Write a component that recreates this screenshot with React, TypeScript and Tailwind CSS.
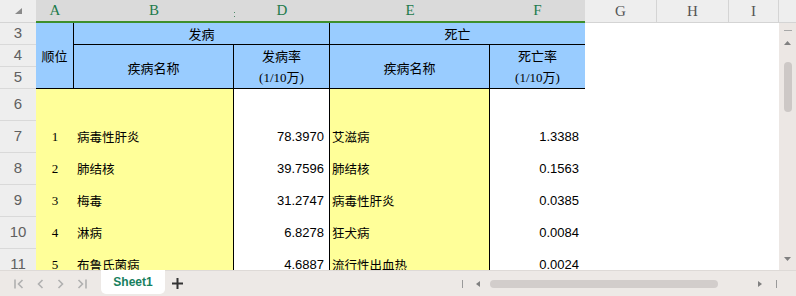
import React from "react";

const dataRows = [
  { no: "1", name: "病毒性肝炎", rate: "78.3970", dName: "艾滋病", dRate: "1.3388" },
  { no: "2", name: "肺结核", rate: "39.7596", dName: "肺结核", dRate: "0.1563" },
  { no: "3", name: "梅毒", rate: "31.2747", dName: "病毒性肝炎", dRate: "0.0385" },
  { no: "4", name: "淋病", rate: "6.8278", dName: "狂犬病", dRate: "0.0084" },
  { no: "5", name: "布鲁氏菌病", rate: "4.6887", dName: "流行性出血热", dRate: "0.0024" },
];

const rowStarts = ["row-start-5", "row-start-6", "row-start-7", "row-start-8", "row-start-9"];

const cjk = "font-['Noto_Sans_CJK_SC',sans-serif]";
const num = "font-['Liberation_Sans',Arial,sans-serif]";

const ColHead = ({ label, w, active }: { label: string; w: string; active?: boolean }) => (
  <div
    className={`${w} h-[23px] flex items-center justify-center text-[15px] font-['Liberation_Serif',serif] ${
      active
        ? "bg-[#dadada] text-[#1d7a4c] border-b-2 border-[#3e8f2c]"
        : "bg-[#eeeeee] text-[#555] border-b border-r border-[#d4d4d4]"
    }`}
  >
    {label}
  </div>
);

const RowHead = ({ n, cls }: { n: string; cls: string }) => (
  <div
    className={`${cls} col-start-1 bg-[#eeeeee] border-b border-[#d9d9d9] flex items-center justify-center text-[15px] text-[#606060] ${num}`}
  >
    {n}
  </div>
);

export default function App() {
  return (
    <div className="w-[796px] h-[296px] bg-white overflow-hidden flex flex-col select-none">
      {/* column letters */}
      <div className="flex h-[23px] shrink-0">
        <div className="w-[36px] h-[23px] bg-[#eeeeee] border-b border-[#d4d4d4] flex items-center justify-center">
          <svg width="10" height="8" viewBox="0 0 10 8">
            <polygon points="9,1 9,7 2,7" fill="#8a8a8a" />
          </svg>
        </div>
        <ColHead label="A" w="w-[38px]" active />
        <div className="relative">
          <ColHead label="B" w="w-[160px]" active />
          <div className="absolute right-[-1px] top-[12px] flex flex-col gap-[3px]">
            <div className="w-px h-px bg-[#4f8a6a]" />
            <div className="w-px h-px bg-[#4f8a6a]" />
          </div>
        </div>
        <ColHead label="D" w="w-[96px]" active />
        <ColHead label="E" w="w-[160px]" active />
        <ColHead label="F" w="w-[95px]" active />
        <ColHead label="G" w="w-[72px]" />
        <ColHead label="H" w="w-[72px]" />
        <ColHead label="I" w="w-[50px]" />
        <div className="flex-1 h-[23px] bg-[#eeeeee] border-b border-[#d4d4d4]" />
      </div>

      <div className="flex h-[247px] shrink-0">
        <div className="flex-1 overflow-hidden">
          <div className="grid grid-cols-[36px_38px_160px_96px_160px_95px_1fr] grid-rows-[22px_22px_22px_32px_32px_32px_32px_32px_32px] text-black">
            <RowHead n="3" cls="row-start-1" />
            <RowHead n="4" cls="row-start-2" />
            <RowHead n="5" cls="row-start-3" />
            <RowHead n="6" cls="row-start-4" />
            <RowHead n="7" cls="row-start-5" />
            <RowHead n="8" cls="row-start-6" />
            <RowHead n="9" cls="row-start-7" />
            <RowHead n="10" cls="row-start-8" />
            <RowHead n="11" cls="row-start-9" />

            {/* header block */}
            <div className={`col-start-2 row-start-1 row-span-3 bg-[#99ccff] border-r border-b border-black flex items-center justify-center text-[13px] ${cjk}`}>
              顺位
            </div>
            <div className={`col-start-3 col-span-2 row-start-1 bg-[#99ccff] border-r border-b border-black flex items-center justify-center text-[13px] ${cjk}`}>
              发病
            </div>
            <div className={`col-start-5 col-span-2 row-start-1 bg-[#99ccff] border-b border-black flex items-center justify-center text-[13px] ${cjk}`}>
              死亡
            </div>
            <div className={`col-start-3 row-start-2 row-span-2 bg-[#99ccff] border-r border-b border-black flex items-center justify-center pt-[3px] text-[13px] ${cjk}`}>
              疾病名称
            </div>
            <div className={`col-start-4 row-start-2 row-span-2 bg-[#99ccff] border-r border-b border-black flex flex-col items-center justify-center text-[13px] leading-[22px] ${cjk}`}>
              <span>发病率</span>
              <span className="font-['Liberation_Serif','Noto_Sans_CJK_SC',serif]">(1/10万)</span>
            </div>
            <div className={`col-start-5 row-start-2 row-span-2 bg-[#99ccff] border-r border-b border-black flex items-center justify-center pt-[3px] text-[13px] ${cjk}`}>
              疾病名称
            </div>
            <div className={`col-start-6 row-start-2 row-span-2 bg-[#99ccff] border-b border-black flex flex-col items-center justify-center text-[13px] leading-[22px] ${cjk}`}>
              <span>死亡率</span>
              <span className="font-['Liberation_Serif','Noto_Sans_CJK_SC',serif]">(1/10万)</span>
            </div>

            {/* empty row 6 */}
            <div className="col-start-2 row-start-4 bg-[#ffff99]" />
            <div className="col-start-3 row-start-4 bg-[#ffff99] border-r border-black" />
            <div className="col-start-4 row-start-4 bg-white border-r border-black" />
            <div className="col-start-5 row-start-4 bg-[#ffff99] border-r border-black" />
            <div className="col-start-6 row-start-4 bg-white" />

            {dataRows.map((r, i) => (
              <React.Fragment key={r.no}>
                <div className={`col-start-2 ${rowStarts[i]} bg-[#ffff99] flex items-center justify-center text-[13px] font-['Liberation_Serif',serif]`}>
                  {r.no}
                </div>
                <div className={`col-start-3 ${rowStarts[i]} bg-[#ffff99] border-r border-black flex items-center pl-[3px] text-[12.5px] whitespace-nowrap ${cjk}`}>
                  {r.name}
                </div>
                <div className={`col-start-4 ${rowStarts[i]} bg-white border-r border-black flex items-center justify-end pr-[5px] text-[13px] ${num}`}>
                  {r.rate}
                </div>
                <div className={`col-start-5 ${rowStarts[i]} bg-[#ffff99] border-r border-black flex items-center pl-[2px] text-[12.5px] whitespace-nowrap ${cjk}`}>
                  {r.dName}
                </div>
                <div className={`col-start-6 ${rowStarts[i]} bg-white flex items-center justify-end pr-[6px] text-[13px] ${num}`}>
                  {r.dRate}
                </div>
              </React.Fragment>
            ))}
          </div>
        </div>

        {/* vertical scrollbar */}
        <div className="w-[17px] bg-[#ece7e4] flex flex-col items-center">
          <div className="mt-[7px] w-[8px] h-px bg-[#a8a8a8]" />
          <svg className="mt-[10px]" width="7" height="4" viewBox="0 0 7 4">
            <polygon points="3.5,0 7,4 0,4" fill="#808080" />
          </svg>
          <div className="mt-[17px] w-[8px] h-[50px] rounded-full bg-[#cdc8c6]" />
          <svg className="mt-auto mb-[9px]" width="7" height="4" viewBox="0 0 7 4">
            <polygon points="0,0 7,0 3.5,4" fill="#808080" />
          </svg>
        </div>
      </div>

      {/* sheet tab bar */}
      <div className="flex-1 flex items-start bg-[#ede9e6] border-t border-[#dedad7]">
        <div className="flex items-center h-[25px] pl-[14px] gap-[13px] text-[#b0b0b0]">
          <svg width="10" height="10" viewBox="0 0 10 10" fill="none" stroke="currentColor" strokeWidth="1.6">
            <path d="M1 0.5V9.5" />
            <path d="M8.5 1L4.5 5L8.5 9" />
          </svg>
          <svg width="7" height="10" viewBox="0 0 7 10" fill="none" stroke="currentColor" strokeWidth="1.6">
            <path d="M5.5 1L1.5 5L5.5 9" />
          </svg>
          <svg width="7" height="10" viewBox="0 0 7 10" fill="none" stroke="currentColor" strokeWidth="1.6">
            <path d="M1.5 1L5.5 5L1.5 9" />
          </svg>
          <svg width="10" height="10" viewBox="0 0 10 10" fill="none" stroke="currentColor" strokeWidth="1.6">
            <path d="M1.5 1L5.5 5L1.5 9" />
            <path d="M9 0.5V9.5" />
          </svg>
        </div>
        <div className="ml-[14px] w-[64px] h-[24px] -mt-px bg-white rounded-b-[5px] flex items-center justify-center text-[12px] font-bold text-[#17805e] font-['Liberation_Sans',Arial,sans-serif]">
          Sheet1
        </div>
        <div className="ml-[7px] h-[25px] flex items-center">
          <svg width="11" height="11" viewBox="0 0 11 11" stroke="#333" strokeWidth="2">
            <path d="M5.5 0V11M0 5.5H11" />
          </svg>
        </div>
        <div className="ml-auto flex items-center h-[25px] pt-[1px] pr-[19px]">
          <div className="w-px h-[8px] bg-[#9a9a9a]" />
          <svg className="ml-[13px]" width="4" height="6" viewBox="0 0 4 6">
            <polygon points="4,0 4,6 0,3" fill="#808080" />
          </svg>
          <div className="ml-[10px] w-[228px] h-[8px] rounded-full bg-[#d2cdcb]" />
          <svg className="ml-[40px]" width="4" height="6" viewBox="0 0 4 6">
            <polygon points="0,0 4,3 0,6" fill="#808080" />
          </svg>
          <div className="ml-[14px] w-px h-[8px] bg-[#9a9a9a]" />
        </div>
      </div>
    </div>
  );
}
